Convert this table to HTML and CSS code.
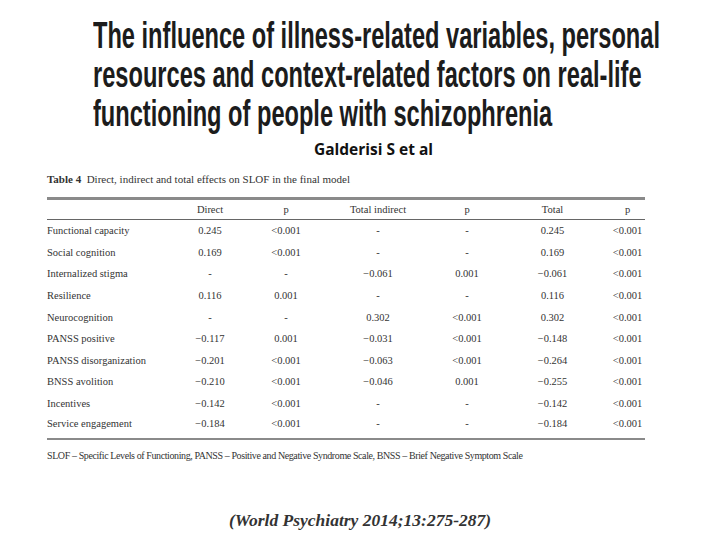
FILE: index.html
```html
<!DOCTYPE html>
<html>
<head>
<meta charset="utf-8">
<link rel="stylesheet" href="styles.css">
</head>
<body>
<div class="page">
  <h1 class="title">
    <span class="tline">The influence of illness-related variables, personal</span>
    <span class="tline">resources and context-related factors on real-life</span>
    <span class="tline">functioning of people with schizophrenia</span>
  </h1>
  <div class="author">Galderisi S et al</div>
  <div class="caption"><b>Table 4</b>&nbsp; Direct, indirect and total effects on SLOF in the final model</div>
  <table class="tbl">
    <colgroup>
      <col class="c-label"><col class="c-direct"><col class="c-p1"><col class="c-ti"><col class="c-p2"><col class="c-total"><col class="c-p3">
    </colgroup>
    <thead>
      <tr><th></th><th>Direct</th><th>p</th><th>Total indirect</th><th>p</th><th>Total</th><th>p</th></tr>
    </thead>
    <tbody>
      <tr><td>Functional capacity</td><td>0.245</td><td>&lt;0.001</td><td>-</td><td>-</td><td>0.245</td><td>&lt;0.001</td></tr>
      <tr><td>Social cognition</td><td>0.169</td><td>&lt;0.001</td><td>-</td><td>-</td><td>0.169</td><td>&lt;0.001</td></tr>
      <tr><td>Internalized stigma</td><td>-</td><td>-</td><td>−0.061</td><td>0.001</td><td>−0.061</td><td>&lt;0.001</td></tr>
      <tr><td>Resilience</td><td>0.116</td><td>0.001</td><td>-</td><td>-</td><td>0.116</td><td>&lt;0.001</td></tr>
      <tr><td>Neurocognition</td><td>-</td><td>-</td><td>0.302</td><td>&lt;0.001</td><td>0.302</td><td>&lt;0.001</td></tr>
      <tr><td>PANSS positive</td><td>−0.117</td><td>0.001</td><td>−0.031</td><td>&lt;0.001</td><td>−0.148</td><td>&lt;0.001</td></tr>
      <tr><td>PANSS disorganization</td><td>−0.201</td><td>&lt;0.001</td><td>−0.063</td><td>&lt;0.001</td><td>−0.264</td><td>&lt;0.001</td></tr>
      <tr><td>BNSS avolition</td><td>−0.210</td><td>&lt;0.001</td><td>−0.046</td><td>0.001</td><td>−0.255</td><td>&lt;0.001</td></tr>
      <tr><td>Incentives</td><td>−0.142</td><td>&lt;0.001</td><td>-</td><td>-</td><td>−0.142</td><td>&lt;0.001</td></tr>
      <tr><td>Service engagement</td><td>−0.184</td><td>&lt;0.001</td><td>-</td><td>-</td><td>−0.184</td><td>&lt;0.001</td></tr>
    </tbody>
  </table>
  <p class="foot">SLOF – Specific Levels of Functioning, PANSS – Positive and Negative Syndrome Scale, BNSS – Brief Negative Symptom Scale</p>
  <p class="cite">(World Psychiatry 2014;13:275-287)</p>
</div>
</body>
</html>
```
FILE: styles.css
```css
html, body {
  margin: 0;
  padding: 0;
  background: #ffffff;
}
.page {
  width: 720px;
  height: 540px;
  overflow: hidden;
}
.title {
  margin: 16px 0 0 93px;
  font-family: "Liberation Sans", Arial, sans-serif;
  font-weight: 700;
  font-size: 36px;
  line-height: 39px;
  color: #1c1c1c;
  transform: scaleX(0.656);
  transform-origin: left top;
  width: 900px;
}
.tline {
  display: block;
  white-space: nowrap;
}
.author {
  margin: 6px 0 0 314px;
  font-family: "Open Sans", "Liberation Sans", sans-serif;
  font-weight: 700;
  font-size: 15.5px;
  line-height: 20px;
  color: #111;
}
.caption {
  margin: 13px 0 0 47px;
  font-family: "Liberation Serif", "Times New Roman", serif;
  font-size: 11px;
  line-height: 14px;
  color: #333;
}
.caption b {
  font-weight: 700;
}
.tbl {
  margin: 11px 0 0 47px;
  width: 598px;
  table-layout: fixed;
  border-collapse: collapse;
  font-family: "Liberation Serif", "Times New Roman", serif;
  font-size: 10.5px;
  color: #333;
  border-top: 3px solid #8a8a8a;
  border-bottom: 2px solid #8a8a8a;
}
.c-label { width: 118px; }
.c-direct { width: 90px; }
.c-p1 { width: 62px; }
.c-ti { width: 122px; }
.c-p2 { width: 56px; }
.c-total { width: 115px; }
.c-p3 { width: 35px; }
.tbl th {
  font-weight: 400;
  height: 19px;
  padding: 0;
  text-align: center;
  border-bottom: 1px solid #666;
}
.tbl td {
  height: 21.6px;
  padding: 0;
  text-align: center;
}
.tbl td:first-child {
  text-align: left;
}
.tbl tbody tr:last-child td {
  height: 20px;
  vertical-align: top;
  padding-top: 4px;
}
.foot {
  margin: 9px 0 0 47px;
  font-family: "Liberation Serif", "Times New Roman", serif;
  font-size: 10px;
  letter-spacing: -0.4px;
  line-height: 13px;
  color: #333;
}
.cite {
  margin: 48px 0 0 0;
  text-align: center;
  font-family: "Liberation Serif", "Times New Roman", serif;
  font-weight: 700;
  font-style: italic;
  font-size: 17.5px;
  line-height: 20px;
  color: #333;
}
```
